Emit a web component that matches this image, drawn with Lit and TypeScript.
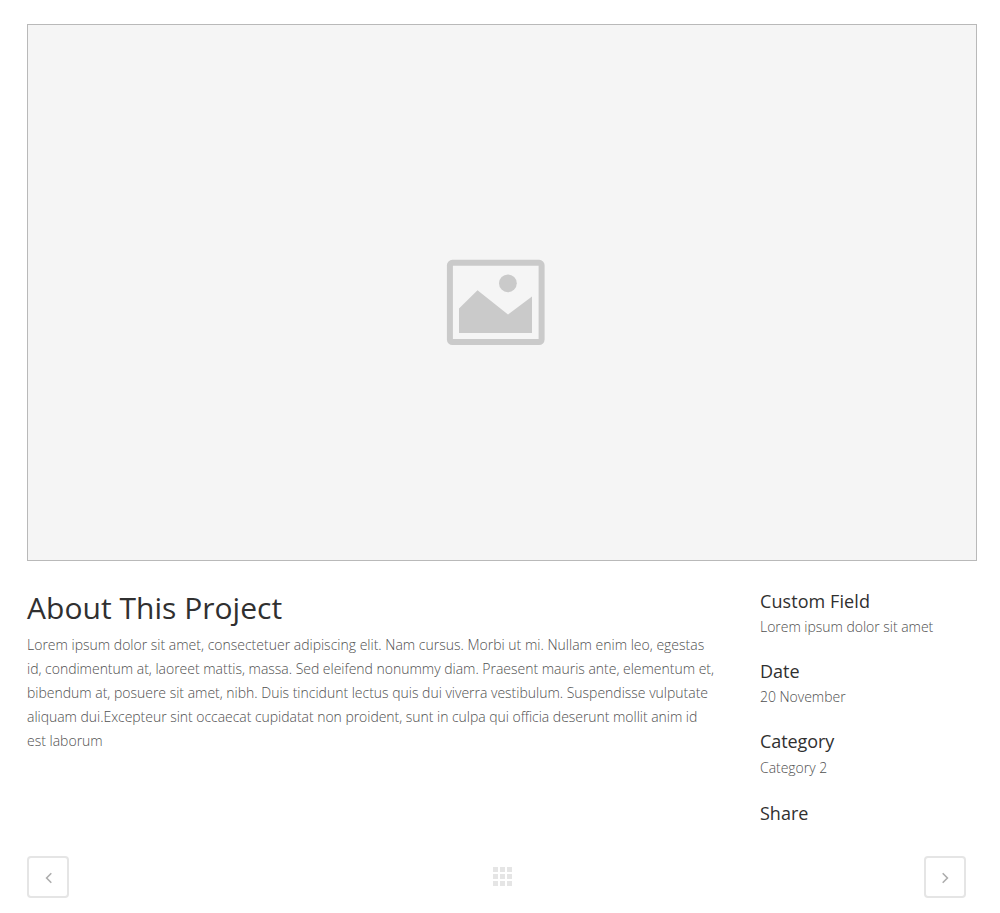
import { LitElement, html, css } from "lit";
import { customElement } from "lit/decorators.js";

const ABOUT = [
  "Lorem ipsum dolor sit amet, consectetuer adipiscing elit. Nam cursus. Morbi ut mi. Nullam enim leo, egestas",
  "id, condimentum at, laoreet mattis, massa. Sed eleifend nonummy diam. Praesent mauris ante, elementum et,",
  "bibendum at, posuere sit amet, nibh. Duis tincidunt lectus quis dui viverra vestibulum. Suspendisse vulputate",
  "aliquam dui.Excepteur sint occaecat cupidatat non proident, sunt in culpa qui officia deserunt mollit anim id",
  "est laborum",
];

const FIELDS = [
  { label: "Custom Field", value: "Lorem ipsum dolor sit amet" },
  { label: "Date", value: "20 November" },
  { label: "Category", value: "Category 2" },
  { label: "Share", value: "" },
];

@customElement("app-root")
export class AppRoot extends LitElement {
  static styles = css`
    :host {
      display: block;
      box-sizing: border-box;
      height: 913px;
      padding: 24px 23px 0 27px;
      background: #fff;
      color: #505050;
      font: 300 14px/24px "Open Sans", sans-serif;
      overflow: hidden;
    }
    .media {
      box-sizing: border-box;
      height: 537px;
      border: 1px solid #b9b9b9;
      background: #f5f5f5;
      padding: 234px 0 0 418px;
    }
    .media svg,
    .grid svg,
    .nav svg {
      display: block;
    }
    .details {
      display: grid;
      grid-template-columns: 733px 1fr;
      height: 295px;
    }
    h2,
    h3,
    p {
      margin: 0;
    }
    h2 {
      padding-top: 27px;
      font-size: 30px;
      line-height: 40px;
      font-weight: 400;
      color: #303030;
      letter-spacing: 0.03px;
      margin-bottom: 5px;
    }
    h3 {
      font-size: 18px;
      line-height: 26px;
      font-weight: 400;
      color: #303030;
    }
    .line {
      display: block;
      white-space: nowrap;
    }
    .line:nth-child(2) {
      letter-spacing: -0.018px;
    }
    .line:nth-child(3) {
      letter-spacing: -0.012px;
    }
    .line:nth-child(4) {
      letter-spacing: -0.036px;
    }
    .fields {
      padding-top: 27px;
    }
    .field {
      height: 70px;
    }
    .field p {
      padding-top: 1px;
      letter-spacing: -0.03px;
    }
    .field:nth-child(1) h3 {
      letter-spacing: 0.08px;
    }
    .field:nth-child(3) {
      height: 72px;
    }
    .field:nth-child(3) h3 {
      letter-spacing: -0.08px;
    }
    .field:nth-child(3) p {
      padding-top: 2px;
    }
    .pager {
      display: flex;
      justify-content: space-between;
      align-items: center;
      width: 939px;
    }
    .nav {
      box-sizing: border-box;
      width: 42px;
      height: 42px;
      padding: 0;
      border: 2px solid #e5e5e5;
      border-radius: 4px;
      background: #fff;
    }
    .grid {
      padding: 0 0 1px 12px;
    }
  `;

  render() {
    return html`
      <div class="media">
        <svg width="100" height="88" viewBox="446 259 100 88">
          <rect x="449.9" y="262.8" width="91.7" height="79.2" rx="2.5" fill="none" stroke="#cacaca" stroke-width="6" />
          <path d="M459 333V308.5L477.5 290.3L508 314.5L532 296.4V333Z" fill="#cacaca" />
          <circle cx="507.9" cy="283.3" r="8.9" fill="#cacaca" />
        </svg>
      </div>
      <div class="details">
        <div>
          <h2>About This Project</h2>
          <p>${ABOUT.map((line) => html`<span class="line">${line}</span>`)}</p>
        </div>
        <div class="fields">
          ${FIELDS.map(
            (f) => html`<div class="field"><h3>${f.label}</h3><p>${f.value}</p></div>`
          )}
        </div>
      </div>
      <div class="pager">
        <button class="nav" aria-label="Previous">
          <svg width="38" height="38" viewBox="0 0 38 38">
            <path d="M22.3 15.2L17.6 20L22.3 24.8" fill="none" stroke="#adadad" stroke-width="1.6" />
          </svg>
        </button>
        <div class="grid">
          <svg width="19" height="19" viewBox="0 0 19 19" fill="#e5e5e5">
            <path d="M0 0h5v5H0zM7 0h5v5H7zM14 0h5v5h-5zM0 7h5v5H0zM7 7h5v5H7zM14 7h5v5h-5zM0 14h5v5H0zM7 14h5v5H7zM14 14h5v5h-5z" />
          </svg>
        </div>
        <button class="nav" aria-label="Next">
          <svg width="38" height="38" viewBox="0 0 38 38">
            <path d="M16.7 15.2L21.4 20L16.7 24.8" fill="none" stroke="#adadad" stroke-width="1.6" />
          </svg>
        </button>
      </div>
    `;
  }
}
